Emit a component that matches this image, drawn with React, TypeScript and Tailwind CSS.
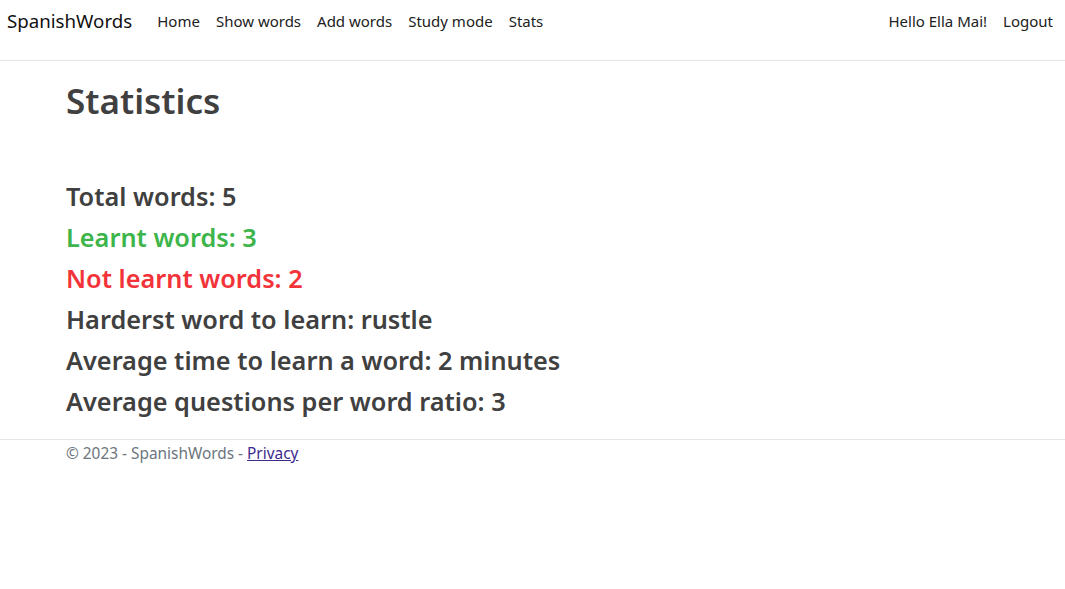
import React from "react";

const navLinks = ["Home", "Show words", "Add words", "Study mode", "Stats"];

const stats = [
  { label: "Total words: 5", color: "text-[#404040]" },
  { label: "Learnt words: 3", color: "text-[#3db54b]" },
  { label: "Not learnt words: 2", color: "text-[#f2333a]" },
  { label: "Harderst word to learn: rustle", color: "text-[#404040]" },
  { label: "Average time to learn a word: 2 minutes", color: "text-[#404040]" },
  { label: "Average questions per word ratio: 3", color: "text-[#404040]" },
];

const App = () => {
  return (
    <div className="min-h-screen bg-white font-['Noto_Sans',sans-serif]">
      <nav className="flex h-[61px] items-start justify-between border-b border-[#e6e6e6] pl-[7px] pr-[4px] pt-[7px]">
        <div className="flex items-center">
          <span className="mr-[17px] text-[18.7px] leading-[28px] text-[#111]">SpanishWords</span>
          {navLinks.map((l) => (
            <a key={l} className="px-[8px] text-[15px] leading-[28px] text-[#212121]">
              {l}
            </a>
          ))}
        </div>
        <div className="flex items-center">
          <span className="px-[8px] text-[15px] leading-[28px] text-[#212121]">Hello Ella Mai!</span>
          <a className="px-[8px] text-[15px] leading-[28px] text-[#212121]">Logout</a>
        </div>
      </nav>

      <main className="pl-[66px] pb-[13px]">
        <h1 className="pt-[17px] text-[35px] font-semibold leading-[46px] text-[#404040]">Statistics</h1>
        <div className="mt-[56px] flex flex-col">
          {stats.map((s) => (
            <h3 key={s.label} className={`mb-[8px] text-[25.3px] font-semibold leading-[33px] ${s.color}`}>
              {s.label}
            </h3>
          ))}
        </div>
      </main>

      <footer className="border-t border-[#e6e6e6] pl-[66px] pt-[2px] text-[15.4px] leading-[24px] text-[#6c757d]">
        © 2023 - SpanishWords - <a className="text-[#3c2a8c] underline">Privacy</a>
      </footer>
    </div>
  );
};

export default App;
